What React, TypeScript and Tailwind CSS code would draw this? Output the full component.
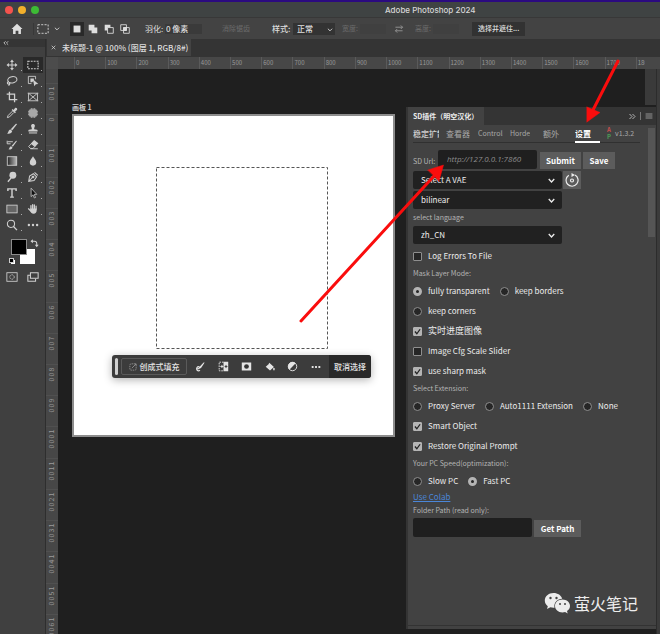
import React from 'react';
import clsx from 'clsx';

const TOOLS: { name: string; icon: React.ReactNode; active?: boolean }[] = [
  {
    name: 'Move',
    icon: (
      <g fill="currentColor" stroke="none">
        <path d="M6.4 2.5h1.2v9H6.4zM2.5 6.4h9v1.2h-9z" />
        <path d="M7 .6 9.2 3.4H4.8zM7 13.4l-2.200-2.800h4.400zM.6 7l2.800-2.200v4.400zM13.400 7l-2.800 2.200V4.800z" />
      </g>
    ),
  },
  {
    name: 'Marquee',
    active: true,
    icon: <rect x="1" y="2.5" width="12" height="9" strokeDasharray="2.2 1.2" />,
  },
  {
    name: 'Lasso',
    icon: (
      <g>
        <ellipse cx="7.4" cy="5.6" rx="5.4" ry="3.7" transform="rotate(-10 7.4 5.6)" />
        <path d="M3.2 8a1.4 1.2 0 1 0 .8 2M3.8 8.4c.8 1 .6 2.8-.8 4" />
      </g>
    ),
  },
  {
    name: 'Object selection',
    icon: (
      <g>
        <path d="M10 5V1.600H1.600V10h3.600" strokeWidth="1" />
        <path d="M4 4h4v2L6 8.4H4z" fill="currentColor" stroke="none" />
        <path d="m6.8 5 6.400 5.600-3 .2-1.600 2.400z" fill="currentColor" stroke="none" />
      </g>
    ),
  },
  {
    name: 'Crop',
    icon: <path d="M4 .8V10h9.2M.8 3.6H10v9.6" strokeWidth="1.5" />,
  },
  {
    name: 'Frame',
    icon: <path d="M1.8 2.6h10.4v8.8H1.8zM1.8 2.6l10.4 8.8M12.2 2.6 1.8 11.4M.8 2.6h1M12.2 2.6h1M.8 11.4h1M12.2 11.4h1" strokeWidth="1" />,
  },
  {
    name: 'Eyedropper',
    icon: (
      <g>
        <path d="M7.6 4.8 2.4 10l-.8 2.4L4 11.6l5.2-5.2" strokeWidth="1.1" />
        <path d="m6.600 3.400 1.200-1 1 1 1.800-2.200c1.400-1 3.200.8 2.200 2.200L10.600 5.200l1 1L10.400 7.400z" fill="currentColor" stroke="none" />
      </g>
    ),
  },
  {
    name: 'Healing patch',
    icon: (
      <g>
        <rect x="2.500" y="2.500" width="9" height="9" rx="1.5" fill="#a8a8a8" stroke="none" />
        <path d="M3 5H1.2M3 7H1.2M3 9H1.2M12.8 5H11M12.8 7H11M12.8 9H11M5 3V1.2M7 3V1.2M9 3V1.2M5 12.8V11M7 12.8V11M9 12.8V11" strokeWidth=".9" />
      </g>
    ),
  },
  {
    name: 'Brush',
    icon: (
      <g fill="currentColor" stroke="none">
        <path d="M13 1.2 7.4 8.6 5.6 7.2 11.6 1z" />
        <path d="M5.2 7.6 7.200 9.400c-.4 2.600-3.200 3.600-6 2.800 1.800-.6 1.400-4.200 4-4.600z" />
      </g>
    ),
  },
  {
    name: 'Clone stamp',
    icon: (
      <g fill="currentColor" stroke="none">
        <path d="M5.600 7.400C6 5.600 4.600 4.600 4.800 3c.4-2.400 4-2.400 4.400 0 .2 1.600-1.200 2.600-.8 4.400l3.400.4c.6.2.6.6.6 2.200H1.600c0-1.600 0-2 .6-2.200z" />
        <path d="M2.200 11h9.600v1.200H2.200z" />
      </g>
    ),
  },
  {
    name: 'History brush',
    icon: (
      <g>
        <path d="M12.800 2.200 8 9 6.600 7.800 11.800 2zM6 8.400l1.600 1.400c-.6 2-2.600 2.800-4.800 2.200 1.400-.6 1-3.200 3.200-3.600z" fill="currentColor" stroke="none" />
        <path d="M1.400 5.600h4M2 3.200h6M1.400 2v3.600" strokeWidth="1.100" />
      </g>
    ),
  },
  {
    name: 'Eraser',
    icon: (
      <g>
        <path d="M5.200 5.400 8.400 2l4 3-3.200 3.600z" fill="currentColor" />
        <path d="M5.200 5.400 2 8.800l2 2.200h3L9.200 8.600M4 11.400h8.600" strokeWidth="1.100" />
      </g>
    ),
  },
  {
    name: 'Gradient',
    icon: (
      <g>
        <defs>
          <linearGradient id="tool-gradient">
            <stop offset="0" stopColor="#222" />
            <stop offset="1" stopColor="#bbb" />
          </linearGradient>
        </defs>
        <rect x="1.500" y="2" width="11" height="10" fill="url(#tool-gradient)" strokeWidth="1" />
      </g>
    ),
  },
  {
    name: 'Blur',
    icon: <path d="M7 1.400c1.200 2.600 3.800 4.600 3.800 7.200a3.800 3.800 0 0 1-7.600 0C3.200 6 5.800 4 7 1.400z" fill="currentColor" stroke="none" />,
  },
  {
    name: 'Dodge',
    icon: (
      <g>
        <circle cx="8" cy="5" r="4" fill="currentColor" stroke="none" />
        <path d="M6 8 2.200 12.600" strokeWidth="1.600" />
      </g>
    ),
  },
  {
    name: 'Pen',
    icon: (
      <g>
        <path d="m2 12 1-6 4.400-2.800 3.800 3.600-3 4.400zM8.800 1.600l3.800 3.600M2 12l4.200-4.400" strokeWidth="1.200" />
        <circle cx="7" cy="7" r="1" />
      </g>
    ),
  },
  {
    name: 'Type',
    icon: <path d="M2.200 4.800V2.200h9.600v2.600M7 2.200v9.600M4.800 11.800h4.400" strokeWidth="1.700" />,
  },
  {
    name: 'Path selection',
    icon: <path d="M4.800 1.400v9.800l2.200-2 1.600 3.600 1.400-.6-1.600-3.600h3z" fill="#111" strokeWidth=".9" />,
  },
  {
    name: 'Rectangle',
    icon: <rect x="1" y="2.500" width="12" height="9" fill="#666" strokeWidth="1" />,
  },
  {
    name: 'Hand',
    icon: (
      <g strokeLinecap="round">
        <path d="M4.600 7V3M6.600 6.600V1.800M8.600 6.600V2.200M10.600 7.200V3.800M4.200 9.200 1.800 6.800" strokeWidth="1.500" />
        <path d="M4 6.400h7.300v2.200c0 2.400-1.400 4-3.600 4S4.600 11 3.400 9z" fill="currentColor" stroke="none" />
      </g>
    ),
  },
  {
    name: 'Zoom',
    icon: (
      <g>
        <circle cx="5.800" cy="5.600" r="4.200" />
        <path d="m8.800 8.800 4 4.200" strokeWidth="1.500" />
      </g>
    ),
  },
  {
    name: 'More tools',
    icon: (
      <g fill="currentColor" stroke="none">
        <circle cx="2.200" cy="7" r="1.400" />
        <circle cx="7" cy="7" r="1.400" />
        <circle cx="11.800" cy="7" r="1.400" />
      </g>
    ),
  },
];

const H_MARKS = Array.from({ length: 19 }, (_, i) => i * 100);
const V_MARKS = [100, ...Array.from({ length: 17 }, (_, i) => i * 100)];

const PANEL_TABS = ['稳定扩散', '查看器', 'ControlNet', 'Horde', '额外', '设置'];

function Glyph({ size = 12, className, children }: { size?: number; className?: string; children: React.ReactNode }) {
  return (
    <svg
      width={size}
      height={size}
      viewBox="0 0 14 14"
      fill="none"
      stroke="currentColor"
      strokeWidth="1.2"
      className={clsx('shrink-0', className)}
      aria-hidden="true"
    >
      {children}
    </svg>
  );
}

function TitleBar() {
  return (
    <header className="flex h-[17px] items-center border-t-2 border-[#2b0a80] bg-[#3f4343] pl-[5px]">
      <div className="flex w-[380px] gap-[5px]">
        <span className="size-2 rounded-full bg-[#f4534d]" />
        <span className="size-2 rounded-full bg-[#f2b02c]" />
        <span className="size-2 rounded-full bg-[#3dbb35]" />
      </div>
      <h1 className="font-[Inter] text-[8px] font-medium whitespace-nowrap text-[#d6d6d6]">Adobe Photoshop 2024</h1>
    </header>
  );
}

function OptionsBar() {
  return (
    <div className="flex h-[22px] items-center border-t border-[#383838] bg-[#434343] text-[8px] whitespace-nowrap text-[#dedede]">
      <button aria-label="Home" className="flex w-[34px] justify-center border-r border-[#383838]">
        <Glyph>
          <path d="M7 .8 13.400 7h-1.800v5.800H8.600V9H5.400v3.800H2.400V7H.6z" fill="currentColor" stroke="none" />
        </Glyph>
      </button>
      <button aria-label="Marquee presets" className="flex w-[36px] items-center gap-[5px] pl-[3px]">
        <Glyph>
          <rect x="1" y="2" width="12" height="10" strokeDasharray="2.400 1.500" strokeWidth="1" />
        </Glyph>
        <Glyph size={6}>
          <path d="m2 4 5 5 5-5" strokeWidth="2" />
        </Glyph>
      </button>
      <div className="flex w-[75px] gap-[2px]">
        <button aria-label="New selection" className="flex size-[14px] items-center justify-center bg-[#292929]">
          <Glyph size={8}>
            <path d="M1 1h12v12H1z" fill="currentColor" stroke="none" />
          </Glyph>
        </button>
        <button aria-label="Add to selection" className="flex size-[14px] items-center justify-center">
          <Glyph size={10}>
            <path d="M1 1h8v4h4v8H5V9H1z" fill="currentColor" stroke="none" />
          </Glyph>
        </button>
        <button aria-label="Subtract from selection" className="flex size-[14px] items-center justify-center">
          <Glyph size={10}>
            <path d="M1 1h8v4H5v4H1z" fill="currentColor" stroke="none" />
            <path d="M5 5h8v8H5z" />
          </Glyph>
        </button>
        <button aria-label="Intersect selections" className="flex size-[14px] items-center justify-center">
          <Glyph size={10}>
            <path d="M1 1h8v8H1zM5 5h8v8H5z" />
            <path d="M5 5h4v4H5z" fill="currentColor" />
          </Glyph>
        </button>
      </div>
      <label htmlFor="feather" className="w-[20px]">羽化:</label>
      <input id="feather" defaultValue="0 像素" className="h-[10px] w-[37px] bg-[#3a3a3a] px-px font-medium" />
      <span className="ml-[20px] w-[50px] text-[7px] text-[#6b6b6b]">消除锯齿</span>
      <label htmlFor="style" className="w-[21px] font-medium">样式:</label>
      <div className="relative w-[42px]">
        <select id="style" className="block h-[12px] w-full appearance-none bg-[#333] pl-1 font-medium">
          <option>正常</option>
        </select>
        <Glyph size={6} className="pointer-events-none absolute top-[4px] right-[2px]">
          <path d="m2 4 5 5 5-5" strokeWidth="2" />
        </Glyph>
      </div>
      <label htmlFor="width" className="ml-[7px] w-[18px] text-[7px] text-[#6b6b6b]">宽度:</label>
      <input id="width" disabled className="h-[10px] w-[26px] bg-[#404040]" />
      <button aria-label="Swap width and height" className="ml-[8px] text-[#9a9a9a]">
        <Glyph size={10}>
          <path d="M2 4.500h10M9.500 2 12 4.500 9.500 7M12 9.500H2M4.500 7 2 9.500 4.500 12" />
        </Glyph>
      </button>
      <label htmlFor="height" className="ml-[11px] w-[18px] text-[7px] text-[#6b6b6b]">高度:</label>
      <input id="height" disabled className="h-[10px] w-[26px] bg-[#404040]" />
      <button className="ml-[13px] h-[14px] bg-[#323232] px-[6px] text-[7px] font-medium">选择并遮住...</button>
    </div>
  );
}

function Toolbar() {
  return (
    <aside className="flex w-[46px] shrink-0 flex-col border-r border-[#2e2e2e] bg-[#404040] text-[#d0d0d0]">
      <button aria-label="Collapse toolbar" className="flex h-[8px] items-center bg-[#353535] pl-[3px]">
        <Glyph size={6}>
          <path d="m6 3-4 4 4 4M12 3 8 7l4 4" strokeWidth="2" />
        </Glyph>
      </button>
      <div className="mt-[10px] grid grid-cols-2 px-[2px]">
        {TOOLS.map((tool) => (
          <button
            key={tool.name}
            aria-label={tool.name}
            className={clsx('relative flex h-4 items-center justify-center', tool.active && 'bg-[#292929]')}
          >
            <Glyph>{tool.icon}</Glyph>
            <i className="absolute right-px bottom-[2px] size-px bg-[#aaa]" />
          </button>
        ))}
      </div>
      <div className="mt-1 ml-[10px] grid grid-cols-[18px_11px] items-start">
        <div className="relative h-[30px]">
          <div className="absolute top-[12px] left-[10px] size-[15px] bg-white" />
          <div className="absolute top-[2px] left-[1px] size-[16px] border border-[#8c8c8c] bg-black" />
          <div className="absolute top-[23px] left-[1px] size-[4px] bg-white" />
          <div className="absolute top-[21px] left-[-1px] size-[5px] border border-[#ccc] bg-black" />
        </div>
        <Glyph size={9} className="mt-[2px] ml-[2px]">
          <path d="M2 3.500h5q3.500 0 3.500 3.500v4" strokeWidth="1.600" />
          <path d="M4.500.5v6L.8 3.500zM7.500 9h6l-3 4z" fill="currentColor" stroke="none" />
        </Glyph>
      </div>
      <div className="mt-[4px] grid grid-cols-2 justify-items-center px-[2px]">
        <button aria-label="Quick mask">
          <Glyph>
            <rect x="1" y="2" width="12" height="10" strokeWidth="1" />
            <circle cx="7" cy="7" r="2.600" strokeDasharray="1.600 1" strokeWidth="1" />
          </Glyph>
        </button>
        <button aria-label="Screen mode">
          <Glyph>
            <path d="M4 2h9v6.500H4z" />
            <path d="M3.500 5H1v7h9V9" />
          </Glyph>
        </button>
      </div>
    </aside>
  );
}

function HorizontalRuler() {
  return (
    <div className="flex h-3 bg-[#474747] pr-[15px]">
      <div className="w-3 shrink-0 bg-[#4c4c4c]" />
      <div className="ml-4 flex-1 overflow-hidden">
        <div className="grid h-full w-[593px] grid-cols-19">
          {H_MARKS.map((mark) => (
            <span key={mark} className="border-l border-[#5a5a5a] pl-px text-[6px] leading-[12px] text-[#9a9a9a]">
              {mark}
            </span>
          ))}
        </div>
      </div>
    </div>
  );
}

function VerticalRuler() {
  return (
    <div className="relative w-3 shrink-0 overflow-hidden bg-[#474747]">
      <div className="absolute top-[14px] left-0 grid h-[562px] w-full grid-rows-18">
        {V_MARKS.map((mark, i) => (
          <div key={i} className="flex flex-col items-center border-t border-[#505050] pt-[2px]">
            {String(mark).split('').map((digit, n) => (
              <span key={n} className="block h-[5px] -rotate-90 text-[7px] leading-[5px] text-[#9a9a9a]">
                {digit}
              </span>
            ))}
          </div>
        ))}
      </div>
    </div>
  );
}

function TaskBar() {
  return (
    <div className="absolute top-[239px] left-[38px] flex h-[23px] w-[259px] items-center overflow-hidden rounded-[3px] bg-[#3c3c3c] text-[#e4e4e4] shadow-[0_2px_8px_rgba(0,0,0,0.3)]">
      <span className="ml-[3px] h-[17px] w-[3px] rounded-full bg-[#d0d0d0]" />
      <button className="ml-[3px] flex h-[17px] w-[66px] shrink-0 items-center justify-center gap-[3px] rounded-[2px] border border-[#5a5a5a] text-[8px] font-medium whitespace-nowrap">
        <Glyph size={8} className="text-[#aaa]">
          <path d="M7 1.500H4Q1.500 1.500 1.500 4v6q0 2.500 2.500 2.500h6q2.500 0 2.500-2.500V7" strokeDasharray="2.500 1.200" />
          <path d="m5 9 7-7M8 1.500h4.500V6" />
        </Glyph>
        创成式填充
      </button>
      <div className="flex flex-1 items-center justify-around px-[2px]">
        <button aria-label="Modify selection">
          <Glyph size={10}>
            <path d="M13.500.8 8 9 5.800 7.500 12 .8z" fill="currentColor" stroke="none" />
            <path d="M7 11.500c-3 2.500-6-1-4-4 1.500-2 4-.5 3 1s-2.500 1-3.500.5" strokeWidth="1.600" />
          </Glyph>
        </button>
        <button aria-label="Invert selection">
          <Glyph size={11}>
            <path d="M7 1h6v12H7z" fill="currentColor" stroke="none" />
            <path d="M7 1.500H1.500v11H7" strokeDasharray="2 1.200" />
            <path d="M3 7h4M5 5v4" />
            <path d="M8.500 7h3.500M10.200 5v4" stroke="#3c3c3c" />
          </Glyph>
        </button>
        <button aria-label="Create mask">
          <Glyph size={11}>
            <path d="M1 2h12v10H1z" fill="currentColor" stroke="none" />
            <circle cx="7" cy="7" r="3" fill="#333" stroke="none" />
          </Glyph>
        </button>
        <button aria-label="Fill selection">
          <Glyph size={10}>
            <path d="m6 1 6.500 6L7 12 1 6.500 5 3z" fill="currentColor" stroke="none" />
            <path d="M12.500 8.500v3" strokeWidth="2" />
          </Glyph>
        </button>
        <button aria-label="Adjustment layer">
          <Glyph size={11}>
            <circle cx="7" cy="7" r="5.400" strokeWidth="1.200" />
            <path d="M11 3a5.600 5.600 0 0 0-8 8z" fill="currentColor" stroke="none" />
          </Glyph>
        </button>
        <button aria-label="More options">
          <Glyph size={10}>
            <path d="M1 7h2.600M5.700 7h2.600M10.400 7H13" strokeWidth="2.600" />
          </Glyph>
        </button>
      </div>
      <button className="h-full w-[42px] shrink-0 bg-[#292929] text-[8px] font-medium whitespace-nowrap">取消选择</button>
    </div>
  );
}

function Workspace() {
  return (
    <div className="flex-1 overflow-hidden bg-[#1f1f1f] pt-[32px] pl-[14px]">
      <p className="h-[13px] text-[7px] leading-[13px] font-bold text-[#c9c9c9]">画板 1</p>
      <div className="relative size-[323px] border-2 border-[#8d8d8d] bg-white">
        <svg className="absolute top-[51px] left-[82px] h-[183px] w-[173px]" aria-hidden="true">
          <rect x="0.500" y="0.500" width="171" height="181" fill="none" stroke="#555" strokeWidth="1" strokeDasharray="3 2" />
        </svg>
        <TaskBar />
      </div>
    </div>
  );
}

function Check({ label, checked, large }: { label: string; checked?: boolean; large?: boolean }) {
  return (
    <label className={clsx('relative flex h-5 items-center gap-[6px]', large && 'text-[9px]')}>
      <input
        type="checkbox"
        defaultChecked={checked}
        className="peer size-[9px] appearance-none rounded-[1px] border border-[#8f8f8f] bg-[#262626] checked:border-[#b4b4b4] checked:bg-[#b4b4b4]"
      />
      <Glyph size={9} className="absolute left-0 hidden text-[#222] peer-checked:block">
        <path d="m3 7 3 3.500L11 3.500" strokeWidth="2" />
      </Glyph>
      {label}
    </label>
  );
}

function Radio({ name, label, checked }: { name: string; label: string; checked?: boolean }) {
  return (
    <label className="flex h-5 items-center gap-[6px]">
      <input
        type="radio"
        name={name}
        defaultChecked={checked}
        className="size-[9px] appearance-none rounded-full border border-[#8f8f8f] bg-[#262626] checked:border-[3px] checked:border-[#b4b4b4]"
      />
      {label}
    </label>
  );
}

function Dropdown({ label, value }: { label: string; value: string }) {
  return (
    <div className="relative w-[149px]">
      <select aria-label={label} className="block h-[18px] w-full appearance-none rounded-[2px] bg-[#212121] pl-2">
        <option>{value}</option>
      </select>
      <Glyph size={7} className="pointer-events-none absolute top-[6px] right-[7px]">
        <path d="m1.500 4 5.500 6 5.500-6" strokeWidth="2.600" />
      </Glyph>
    </div>
  );
}

function SectionLabel({ children }: { children: React.ReactNode }) {
  return <p className="h-[15px] text-[7px] leading-[15px] text-[#b4b4b4]">{children}</p>;
}

function PluginPanel() {
  return (
    <section className="flex flex-1 flex-col border-l-2 border-[#343434] bg-[#424242] text-[8px] whitespace-nowrap text-[#ececec]">
      <div className="flex h-[18px] items-center bg-[#343434]">
        <h2 className="h-full bg-[#424242] pr-[6px] pl-[5px] text-[7px] leading-[18px] font-bold">SD插件（明空汉化）</h2>
        <div className="ml-auto flex items-center gap-1 pr-[3px] text-[#b5b5b5]">
          <Glyph size={7}>
            <path d="m1 2 5 5-5 5M7 2l5 5-5 5" strokeWidth="2" />
          </Glyph>
          <span className="h-2 w-px bg-[#777]" />
          <Glyph size={8}>
            <path d="M1 3.500h12M1 7h12M1 10.500h12" strokeWidth="1.300" />
          </Glyph>
        </div>
      </div>
      <div className="flex flex-1 justify-between pr-px pl-[5px]">
        <div className="w-[227px]">
          <nav className="flex h-[18px] border-b border-[#303030] text-[8px] leading-[17px] text-[#a8a8a8]">
            {PANEL_TABS.map((tab, i) => (
              <a
                key={tab}
                href="#"
                className={clsx(
                  'h-[18px] overflow-hidden',
                  i === 0 && 'mr-[7px] w-[26px] font-medium text-[#d0d0d0]',
                  i === 1 && 'mr-[8px] w-[24px]',
                  i === 2 && 'mr-[7px] w-[25px] text-[7px]',
                  i === 3 && 'mr-[13px] w-[20px] text-[7px]',
                  i === 4 && 'mr-[15px] w-[17px]',
                  i === 5 && 'w-[25px] border-b-2 border-white font-bold text-white'
                )}
              >
                {tab}
              </a>
            ))}
            <span className="mt-px ml-[7px] flex w-[8px] flex-col text-[6px] leading-[7px]">
              <b className="text-[#c94f4f]">A</b>
              <b className="text-[#4b9a55]">P</b>
            </span>
            <span className="text-[7px]">v1.3.2</span>
          </nav>
          <div className="mt-[7px] flex h-[19px] items-end">
            <label htmlFor="sd-url" className="w-[25px] text-[7px] leading-[16px] text-[#b4b4b4]">SD Url:</label>
            <input
              id="sd-url"
              placeholder="http://127.0.0.1:7860"
              className="mr-[3px] h-[19px] w-[99px] self-start rounded-[2px] bg-[#1f1f1f] px-[9px] pb-[2px] font-['Open_Sans'] text-[8px] italic placeholder:text-[#8d8d8d]"
            />
            <button className="mr-[2px] h-[17px] w-[41px] bg-[#5c5c5c] font-bold text-white">Submit</button>
            <button className="h-[17px] w-[32px] bg-[#5c5c5c] font-bold text-white">Save</button>
          </div>
          <div className="mt-[2px] mb-[2px] flex gap-px">
            <Dropdown label="VAE" value="Select A VAE" />
            <button aria-label="Refresh" className="flex size-[18px] items-center justify-center bg-[#5c5c5c]">
              <Glyph size={14}>
                <path d="M10 2a6 6 0 1 1-6.200.2" />
                <path d="M6.500 0v4L10 2z" fill="currentColor" stroke="none" />
                <circle cx="7" cy="7.500" r="1.500" />
              </Glyph>
            </button>
          </div>
          <Dropdown label="Upscaler" value="bilinear" />
          <p className="h-[17px] text-[7px] leading-[16px] text-[#b4b4b4]">select language</p>
          <Dropdown label="Language" value="zh_CN" />
          <div className="mt-[2px]">
            <Check label="Log Errors To File" />
            <SectionLabel>Mask Layer Mode:</SectionLabel>
            <div className="flex flex-wrap gap-x-[10px]">
              <Radio name="mask" label="fully transparent" checked />
              <Radio name="mask" label="keep borders" />
            </div>
            <Radio name="mask" label="keep corners" />
            <Check label="实时进度图像" checked large />
            <Check label="Image Cfg Scale Slider" />
            <Check label="use sharp mask" checked />
            <SectionLabel>Select Extension:</SectionLabel>
            <div className="flex gap-x-[10px]">
              <Radio name="extension" label="Proxy Server" />
              <Radio name="extension" label="Auto1111 Extension" />
              <Radio name="extension" label="None" />
            </div>
            <Check label="Smart Object" checked />
            <Check label="Restore Original Prompt" checked />
            <SectionLabel>Your PC Speed(optimization):</SectionLabel>
            <div className="flex gap-x-[10px]">
              <Radio name="speed" label="Slow PC" />
              <Radio name="speed" label="Fast PC" checked />
            </div>
          </div>
          <a href="#" className="block h-[13px] leading-[12px] text-[#4a86d8] underline">Use Colab</a>
          <label htmlFor="folder" className="block h-[14px] text-[7px] leading-[12px] text-[#b4b4b4]">Folder Path (read only):</label>
          <div className="flex items-end gap-[2px]">
            <input id="folder" readOnly className="h-[19px] w-[119px] rounded-[2px] bg-[#1f1f1f] px-2" />
            <button className="h-[17px] w-[47px] bg-[#5c5c5c] font-bold text-white">Get Path</button>
          </div>
        </div>
        <div className="mt-[3px] h-[109px] w-[7px] bg-[#555]" />
      </div>
      <div className="flex items-center justify-end gap-[3px] pr-[18px] pb-[10px] text-[#ececec]">
        <svg width="27" height="22" viewBox="0 0 27 22" aria-hidden="true">
          <path d="M9.500 1C4.500 1 .8 4.300.8 8.500c0 2.400 1.200 4.300 3 5.700L3 17l3.400-1.700c1 .3 2 .5 3.100.5h1C9.500 10 14 6.500 18.200 6.700 17.300 3.400 13.800 1 9.500 1z" fill="currentColor" />
          <path d="M18.500 7.600c-4.300 0-7.500 2.800-7.500 6.400s3.200 6.400 7.500 6.400c.9 0 1.800-.2 2.600-.4l2.600 1.400-.7-2.300c1.800-1.200 3-3 3-5.100 0-3.600-3.400-6.400-7.500-6.400z" fill="currentColor" />
          <g fill="#424242">
            <circle cx="6.500" cy="6" r="1.200" />
            <circle cx="12.500" cy="6" r="1.200" />
            <circle cx="16" cy="12" r="1" />
            <circle cx="21" cy="12" r="1" />
          </g>
        </svg>
        <span className="text-[16px] leading-[24px]">萤火笔记</span>
      </div>
      <div className="h-1 border-t border-[#333]" />
    </section>
  );
}

export default function App() {
  return (
    <div className="relative flex h-screen flex-col overflow-hidden bg-[#3b3b3b] font-['Noto_Sans_CJK_SC',sans-serif]">
      <TitleBar />
      <OptionsBar />
      <div className="flex min-h-0 flex-1">
        <Toolbar />
        <main className="flex min-w-0 flex-1 flex-col">
          <div className="flex h-[18px] items-start bg-[#343434]">
            <div className="ml-px flex h-[17px] items-center gap-[6px] bg-[#434343] pr-[3px] pl-1 text-[8px] font-medium whitespace-nowrap text-[#dedede]">
              <button aria-label="Close document">
                <Glyph size={5}>
                  <path d="m2 2 10 10M12 2 2 12" strokeWidth="2" />
                </Glyph>
              </button>
              未标题-1 @ 100% (图层 1, RGB/8#)
            </div>
          </div>
          <HorizontalRuler />
          <div className="flex min-h-0 flex-1">
            <VerticalRuler />
            <div className="flex min-w-0 flex-1 bg-[#1f1f1f]">
              <Workspace />
              <div className="flex w-[250px] shrink-0 flex-col pb-[5px]">
                {/* document scroll track above the docked panel */}
                <div className="flex h-[38px] justify-end pb-[2px]">
                  <div className="w-[11px] bg-[#3a3a3a]" />
                </div>
                <PluginPanel />
              </div>
            </div>
            <div className="w-1 shrink-0 border-l border-[#2c2c2c] bg-[#3b3b3b]" />
          </div>
        </main>
      </div>
      <svg className="pointer-events-none absolute top-0 left-0" width="660" height="340" aria-hidden="true">
        <g stroke="#fa0d0d" strokeWidth="3" fill="#fa0d0d" strokeLinecap="round">
          <path d="M618 61 593 110" />
          <path d="M301 321 434 176" />
          <path d="M587 107 600 112.500 587 122z" strokeWidth="0.500" />
          <path d="M428 170 443.500 165 439 181z" strokeWidth="0.500" />
        </g>
      </svg>
    </div>
  );
}
